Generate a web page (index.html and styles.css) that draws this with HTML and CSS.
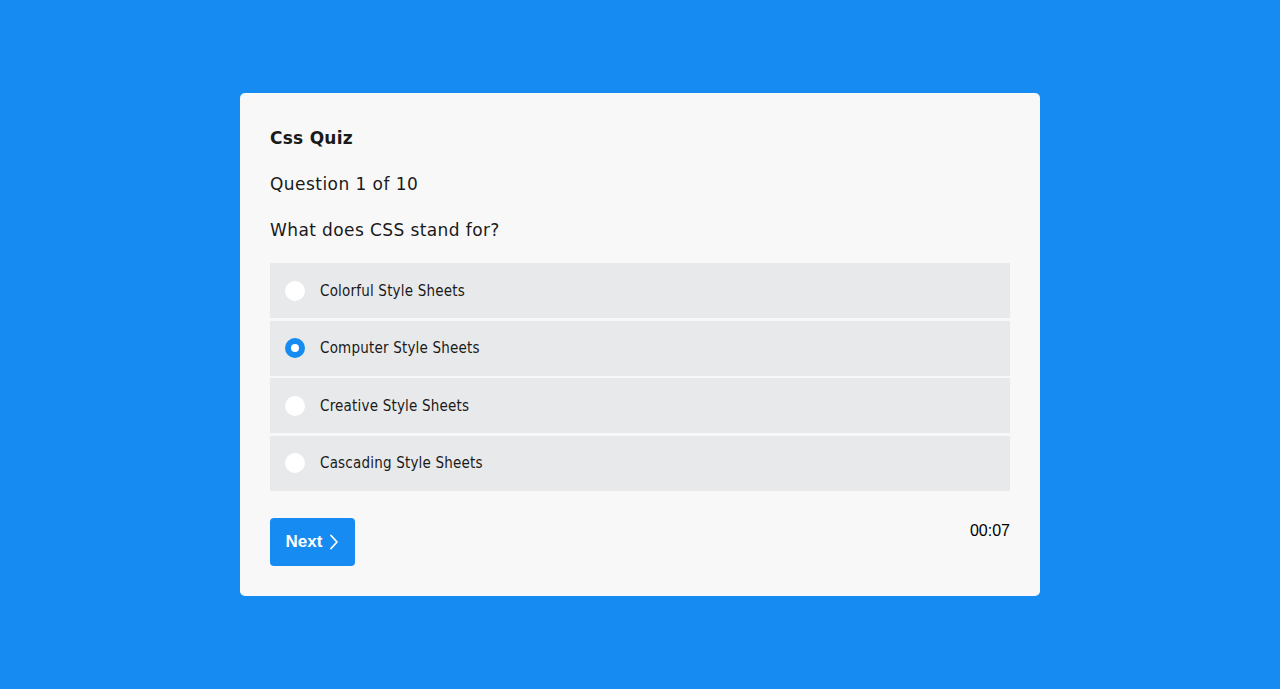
FILE: index.html
```html
<!DOCTYPE html>
<html>
<head>
<meta charset="utf-8">
<link rel="stylesheet" href="styles.css">
</head>
<body>
<div class="page">
  <div class="card">
    <h1 class="title">Css Quiz</h1>
    <p class="counter">Question 1 of 10</p>
    <p class="question">What does CSS stand for?</p>
    <div class="options">
      <label class="option"><span class="radio"></span><span class="label">Colorful Style Sheets</span></label>
      <label class="option"><span class="radio checked"></span><span class="label">Computer Style Sheets</span></label>
      <label class="option"><span class="radio"></span><span class="label">Creative Style Sheets</span></label>
      <label class="option"><span class="radio"></span><span class="label">Cascading Style Sheets</span></label>
    </div>
    <div class="footer">
      <button class="next">Next
        <svg width="10" height="16" viewBox="0 0 10 16"><path d="M2 1.5 L8 8 L2 14.5" fill="none" stroke="#fff" stroke-width="1.8" stroke-linecap="round" stroke-linejoin="round"/></svg>
      </button>
      <span class="timer">00:07</span>
    </div>
  </div>
</div>
</body>
</html>
```
FILE: styles.css
```css
* { box-sizing: border-box; }
html, body { margin: 0; padding: 0; }
body {
  background: #168bf2;
  font-family: "DejaVu Sans", Verdana, sans-serif;
  color: #1a1a1a;
}
.page {
  height: 689px;
  display: flex;
  justify-content: center;
  padding-top: 93px;
}
.card {
  width: 800px;
  height: 503px;
  background: #f8f8f8;
  border-radius: 5px;
  padding: 30px;
}
.title {
  margin: 0;
  font-size: 17px;
  font-weight: bold;
  line-height: 28px;
  margin-top: 1px;
  letter-spacing: 0.25px;
}
.counter {
  margin: 18px 0 0;
  font-size: 17px;
  line-height: 28px;
  letter-spacing: 0.45px;
}
.question {
  margin: 18px 0 0;
  font-size: 17px;
  line-height: 28px;
  letter-spacing: 0.4px;
}
.options {
  margin-top: 19px;
  display: flex;
  flex-direction: column;
  gap: 2.5px;
}
.option {
  height: 55px;
  background: #e8e9ea;
  display: flex;
  align-items: center;
  padding-left: 15px;
}
.radio {
  width: 20px;
  height: 20px;
  border-radius: 50%;
  background: #fff;
  flex: none;
}
.radio.checked {
  background: #fff;
  border: 6px solid #168bf2;
}
.label {
  margin-left: 15px;
  font-family: "DejaVu Sans Condensed", "DejaVu Sans", sans-serif;
  font-size: 15px;
  letter-spacing: 0.2px;
  color: #1a1a1a;
}
.footer {
  margin-top: 27px;
  display: flex;
  justify-content: space-between;
  align-items: flex-start;
}
.next {
  width: 85px;
  height: 48px;
  border: none;
  border-radius: 4px;
  background: #168bf2;
  color: #fff;
  font-family: "Liberation Sans", Arial, sans-serif;
  font-weight: bold;
  font-size: 17px;
  display: flex;
  align-items: center;
  justify-content: center;
  gap: 7px;
  padding: 0;
}
.timer {
  font-family: "Liberation Sans", Arial, sans-serif;
  font-size: 16px;
  color: #000;
  margin-top: 4px;
}
```
